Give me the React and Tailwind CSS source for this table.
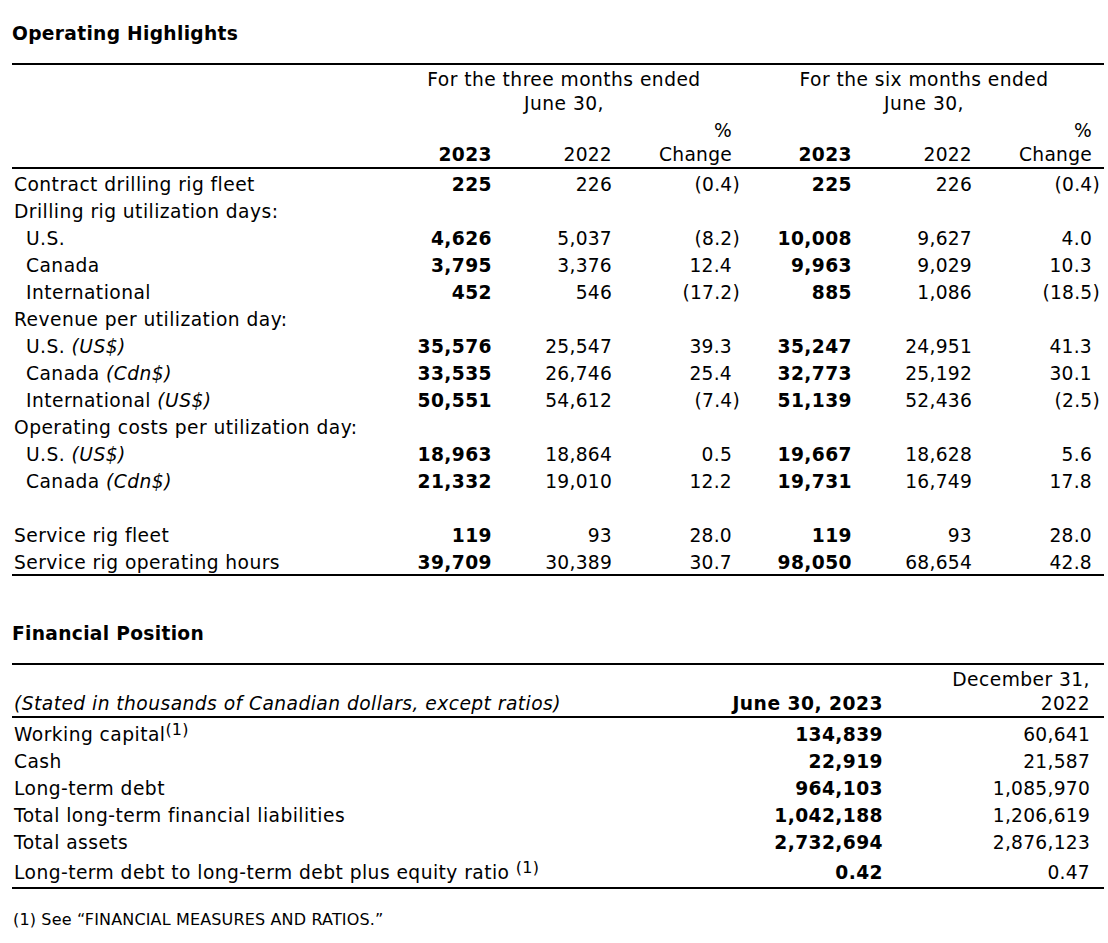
import React from 'react';

// Operating highlights rows: label, indent, values [3m 2023, 3m 2022, 3m %, 6m 2023, 6m 2022, 6m %]
const operating = [
    { label: 'Contract drilling rig fleet', values: ['225', '226', '(0.4)', '225', '226', '(0.4)'] },
    { label: 'Drilling rig utilization days:' },
    { label: 'U.S.', indent: true, values: ['4,626', '5,037', '(8.2)', '10,008', '9,627', '4.0'] },
    { label: 'Canada', indent: true, values: ['3,795', '3,376', '12.4', '9,963', '9,029', '10.3'] },
    { label: 'International', indent: true, values: ['452', '546', '(17.2)', '885', '1,086', '(18.5)'] },
    { label: 'Revenue per utilization day:' },
    { label: 'U.S.', unit: '(US$)', indent: true, values: ['35,576', '25,547', '39.3', '35,247', '24,951', '41.3'] },
    { label: 'Canada', unit: '(Cdn$)', indent: true, values: ['33,535', '26,746', '25.4', '32,773', '25,192', '30.1'] },
    { label: 'International', unit: '(US$)', indent: true, values: ['50,551', '54,612', '(7.4)', '51,139', '52,436', '(2.5)'] },
    { label: 'Operating costs per utilization day:' },
    { label: 'U.S.', unit: '(US$)', indent: true, values: ['18,963', '18,864', '0.5', '19,667', '18,628', '5.6'] },
    { label: 'Canada', unit: '(Cdn$)', indent: true, values: ['21,332', '19,010', '12.2', '19,731', '16,749', '17.8'] },
    { label: '' },
    { label: 'Service rig fleet', values: ['119', '93', '28.0', '119', '93', '28.0'] },
    { label: 'Service rig operating hours', values: ['39,709', '30,389', '30.7', '98,050', '68,654', '42.8'] },
];

const financial = [
    { label: 'Working capital', note: true, values: ['134,839', '60,641'] },
    { label: 'Cash', values: ['22,919', '21,587'] },
    { label: 'Long-term debt', values: ['964,103', '1,085,970'] },
    { label: 'Total long-term financial liabilities', values: ['1,042,188', '1,206,619'] },
    { label: 'Total assets', values: ['2,732,694', '2,876,123'] },
];

const Num = ({ value, bold }) => {
    const neg = value.startsWith('(');
    return (
        <div className={`pr-[12px] text-right ${bold ? 'font-bold tracking-[0.4px]' : 'tracking-[0.25px]'}`}>
            {neg ? <span className="-mr-[8px]">{value}</span> : value}
        </div>
    );
};

const OperatingHighlights = () => {
    return (
        <section>
            <h2 className="pt-[22px] text-[18.67px] leading-[24px] font-bold tracking-[0.3px]">Operating Highlights</h2>
            <div className="mt-[17px] border-t-2 border-b-2 border-black">
                {/* header */}
                <div className="grid grid-cols-[1fr_360px_360px] pt-[3px] border-b-2 border-black">
                    <div></div>
                    <div className="text-center leading-[24px]">For the three months ended<br />June 30,</div>
                    <div className="text-center leading-[24px]">For the six months ended<br />June 30,</div>
                    <div className="col-span-3 mt-[3px] grid grid-cols-[1fr_120px_120px_120px_120px_120px_120px] items-end leading-[24px]">
                        <div></div>
                        <div className="pr-[12px] text-right font-bold tracking-[0.4px]">2023</div>
                        <div className="pr-[12px] text-right tracking-[0.25px]">2022</div>
                        <div className="pr-[12px] text-right tracking-[0.25px]">%<br />Change</div>
                        <div className="pr-[12px] text-right font-bold tracking-[0.4px]">2023</div>
                        <div className="pr-[12px] text-right tracking-[0.25px]">2022</div>
                        <div className="pr-[12px] text-right tracking-[0.25px]">%<br />Change</div>
                    </div>
                </div>
                {/* body */}
                {operating.map((row, i) => (
                    <div key={i} className="grid h-[27px] grid-cols-[1fr_120px_120px_120px_120px_120px_120px] pt-[5px] leading-[21px]">
                        <div className={row.indent ? 'pl-[14px]' : 'pl-[2px]'}>
                            {row.label}
                            {row.unit && <> <em>{row.unit}</em></>}
                        </div>
                        {row.values && row.values.map((v, j) => (
                            <Num key={j} value={v} bold={j === 0 || j === 3} />
                        ))}
                    </div>
                ))}
            </div>
        </section>
    );
};

const FinancialPosition = () => {
    return (
        <section>
            <h2 className="mt-[46px] text-[18.67px] leading-[24px] font-bold tracking-[0.3px]">Financial Position</h2>
            <div className="mt-[17px] border-t-2 border-b-2 border-black">
                <div className="grid grid-cols-[1fr_200px_207px] items-end border-b-2 border-black pt-[3px] leading-[24px]">
                    <div className="pl-[2px] italic tracking-[0.45px]">(Stated in thousands of Canadian dollars, except ratios)</div>
                    <div className="pr-[14px] text-right font-bold tracking-[0.5px]">June 30, 2023</div>
                    <div className="pr-[14px] text-right">December 31,<br />2022</div>
                </div>
                <div className="pt-[1px]">
                    {financial.map((row, i) => (
                        <div key={i} className="grid h-[27px] grid-cols-[1fr_200px_207px] pt-[5px] leading-[21px]">
                            <div className="pl-[2px]">
                                {row.label}
                                {row.note && <sup className="-top-[6px] text-[16px] tracking-[0.2px]">(1)</sup>}
                            </div>
                            <div className="pr-[14px] text-right font-bold tracking-[0.4px]">{row.values[0]}</div>
                            <div className="pr-[14px] text-right tracking-[0.25px]">{row.values[1]}</div>
                        </div>
                    ))}
                    <div className="grid h-[33px] grid-cols-[1fr_200px_207px] pt-[8px] leading-[21px]">
                        <div className="pl-[2px]">
                            Long-term debt to long-term debt plus equity ratio <sup className="-top-[6px] text-[16px] tracking-[0.2px]">(1)</sup>
                        </div>
                        <div className="pr-[14px] text-right font-bold tracking-[0.4px]">0.42</div>
                        <div className="pr-[14px] text-right tracking-[0.25px]">0.47</div>
                    </div>
                </div>
            </div>
            <p className="mt-[21px] pl-[1px] text-[16px] leading-[20px] tracking-[0.15px]">(1) See “FINANCIAL MEASURES AND RATIOS.”</p>
        </section>
    );
};

export default function App() {
    return (
        <div className="min-h-[943px] w-[1108px] bg-white pl-[12px] pr-[4px] font-['DejaVu_Sans',sans-serif] text-[18.67px] tracking-[0.45px] text-black">
            <OperatingHighlights />
            <FinancialPosition />
        </div>
    );
}
